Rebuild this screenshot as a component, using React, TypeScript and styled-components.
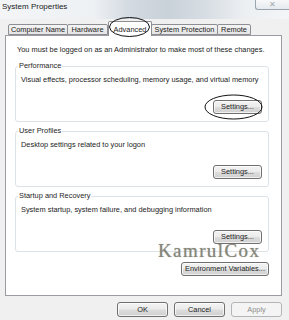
import React from "react";
import styled, { createGlobalStyle } from "styled-components";

const Global = createGlobalStyle`
  html, body { margin: 0; padding: 0; background: #f0f0f0; }
  * { box-sizing: border-box; }
`;

const Window = styled.div`
  position: relative;
  width: 289px;
  height: 320px;
  overflow: hidden;
  background: #f0f0f0;
  font-family: "Liberation Sans", Arial, sans-serif;
  font-size: 7.4px;
  color: #222222;
  display: flex;
  flex-direction: column;
`;

const TitleBar = styled.div`
  height: 19px;
  display: flex;
  justify-content: space-between;
  align-items: flex-start;
  background: linear-gradient(
    to right,
    #f3f5f7 0%,
    #eef1f4 32%,
    #d3dae1 45%,
    #c9d1d9 58%,
    #d8dee4 72%,
    #eceff2 84%,
    #f3f5f7 100%
  );
`;

const Title = styled.span`
  padding: 2px 0 0 2px;
  font-size: 8px;
  line-height: 9px;
  color: #1a1a1a;
`;

const CloseButton = styled.div`
  width: 34px;
  height: 10px;
  display: flex;
  align-items: center;
  justify-content: center;
  border: 1px solid #9aa4ae;
  border-top: none;
  border-right: none;
  border-radius: 0 0 0 3px;
  background: linear-gradient(#f6f7f9, #e6eaee);
  color: #a4a9ae;
  font-size: 8px;
  line-height: 8px;
`;

const Body = styled.div`
  padding-left: 5px;
  display: flex;
  flex-direction: column;
`;

const TabRow = styled.div`
  height: 16px;
  display: flex;
  align-items: flex-end;
  padding-left: 3px;
`;

const Tab = styled.div<{ $w: number; $active?: boolean }>`
  position: relative;
  width: ${(p) => p.$w}px;
  height: ${(p) => (p.$active ? 15 : 11)}px;
  margin-left: ${(p) => (p.$active ? 0 : -1)}px;
  margin-bottom: ${(p) => (p.$active ? -1 : 0)}px;
  z-index: ${(p) => (p.$active ? 2 : 1)};
  border: 1px solid #8c8e94;
  border-bottom: ${(p) => (p.$active ? "none" : "1px solid #8c8e94")};
  border-radius: 2px 2px 0 0;
  background: ${(p) =>
    p.$active ? "#ffffff" : "linear-gradient(#f4f4f4, #e4e4e4)"};
  display: flex;
  align-items: ${(p) => (p.$active ? "flex-start" : "center")};
  justify-content: center;
  padding-top: ${(p) => (p.$active ? 3 : 0)}px;
  line-height: 9px;
  white-space: nowrap;
  &:first-child {
    margin-left: 0;
  }
`;

const Panel = styled.div`
  width: 277px;
  height: 261px;
  border: 1px solid #9a9ca2;
  background: #ffffff;
  padding: 9px 12px 0 9px;
  display: flex;
  flex-direction: column;
`;

const Intro = styled.div`
  margin-left: 2px;
  line-height: 10px;
  white-space: nowrap;
`;

const Group = styled.fieldset`
  margin: 4px 0 0 0;
  min-inline-size: 0;
  border: 1px solid #dce2e7;
  border-radius: 3px;
  padding: 4px 6px 7px 6px;
  display: flex;
  flex-direction: column;
  &:first-of-type {
    margin-top: 6px;
  }
`;

const Legend = styled.legend`
  margin-left: -4px;
  padding: 0 1px;
  line-height: 10px;
  color: #262626;
`;

const Desc = styled.div`
  line-height: 10px;
  margin-left: -1px;
  white-space: nowrap;
`;

const ButtonRow = styled.div<{ $top: number }>`
  display: flex;
  justify-content: flex-end;
  margin-top: ${(p) => p.$top}px;
`;

const Button = styled.button<{ $w: number; $h?: number }>`
  width: ${(p) => p.$w}px;
  height: ${(p) => p.$h ?? 14}px;
  padding: 0;
  border: 1px solid #707070;
  border-radius: 3px;
  background: linear-gradient(#f3f3f3 0%, #ebebeb 48%, #dddddd 52%, #cfcfcf 100%);
  box-shadow: inset 0 0 0 1px rgba(255, 255, 255, 0.7);
  font-family: "Liberation Sans", Arial, sans-serif;
  font-size: 7.4px;
  line-height: 10px;
  color: #222222;
  display: flex;
  align-items: center;
  justify-content: center;
  &:disabled {
    border-color: #b3b6b9;
    background: #f4f4f4;
    box-shadow: none;
    color: #8d8d8d;
  }
`;

const Footer = styled.div`
  display: flex;
  justify-content: flex-end;
  gap: 6px;
  padding: 6px 7px 0 0;
`;

const Watermark = styled.div`
  position: absolute;
  left: 158px;
  top: 241px;
  font-family: "Liberation Serif", "Times New Roman", serif;
  font-size: 19px;
  line-height: 19px;
  letter-spacing: 1.4px;
  color: #86867a;
  text-shadow: 0 0 1px rgba(90, 90, 80, 0.5);
  pointer-events: none;
`;

const Marks = styled.svg`
  position: absolute;
  left: 0;
  top: 0;
  pointer-events: none;
  z-index: 5;
`;

export default function App() {
  return (
    <Window>
      <Global />
      <TitleBar>
        <Title>System Properties</Title>
        <CloseButton>✕</CloseButton>
      </TitleBar>
      <Body>
        <TabRow>
          <Tab $w={60}>Computer Name</Tab>
          <Tab $w={41}>Hardware</Tab>
          <Tab $w={44} $active>
            Advanced
          </Tab>
          <Tab $w={67}>System Protection</Tab>
          <Tab $w={34}>Remote</Tab>
        </TabRow>
        <Panel>
          <Intro>
            You must be logged on as an Administrator to make most of these changes.
          </Intro>
          <Group>
            <Legend>Performance</Legend>
            <Desc>Visual effects, processor scheduling, memory usage, and virtual memory</Desc>
            <ButtonRow $top={15}>
              <Button $w={49}>Settings...</Button>
            </ButtonRow>
          </Group>
          <Group>
            <Legend>User Profiles</Legend>
            <Desc>Desktop settings related to your logon</Desc>
            <ButtonRow $top={15}>
              <Button $w={49}>Settings...</Button>
            </ButtonRow>
          </Group>
          <Group>
            <Legend>Startup and Recovery</Legend>
            <Desc>System startup, system failure, and debugging information</Desc>
            <ButtonRow $top={15}>
              <Button $w={49}>Settings...</Button>
            </ButtonRow>
          </Group>
          <ButtonRow $top={10}>
            <Button $w={88}>Environment Variables...</Button>
          </ButtonRow>
        </Panel>
        <Footer>
          <Button $w={51} $h={15}>OK</Button>
          <Button $w={51} $h={15}>Cancel</Button>
          <Button $w={51} $h={15} disabled>
            Apply
          </Button>
        </Footer>
      </Body>
      <Watermark>KamrulCox</Watermark>
      <Marks width="289" height="320" viewBox="0 0 289 320">
        <ellipse cx="129.5" cy="27" rx="20" ry="9.5" fill="none" stroke="#111" strokeWidth="1" />
        <ellipse cx="233.5" cy="107" rx="28.5" ry="12" fill="none" stroke="#111" strokeWidth="1" />
      </Marks>
    </Window>
  );
}
